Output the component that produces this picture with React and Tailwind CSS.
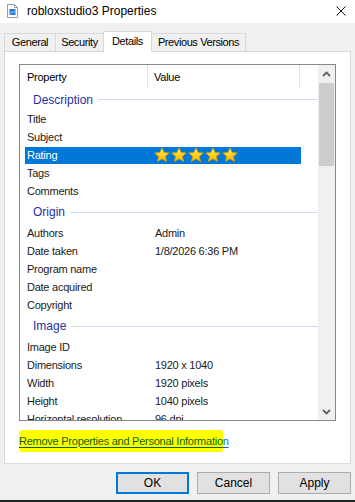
import React from 'react';

const font = { fontFamily: '"Liberation Sans", Arial, sans-serif' };

function Star() {
  return (
    <svg width="16" height="16" viewBox="0 0 16 16">
      <defs>
        <linearGradient id="sg" x1="0" y1="0" x2="0" y2="1">
          <stop offset="0" stopColor="#fff29a" />
          <stop offset="0.5" stopColor="#ffd21f" />
          <stop offset="1" stopColor="#f5b400" />
        </linearGradient>
      </defs>
      <path
        d="M8 0.8 L10.1 5.6 L15.3 6 L11.3 9.4 L12.6 14.6 L8 11.8 L3.4 14.6 L4.7 9.4 L0.7 6 L5.9 5.6 Z"
        fill="url(#sg)"
        stroke="#d99a00"
        strokeWidth="0.8"
        strokeLinejoin="round"
      />
    </svg>
  );
}

function FileIcon() {
  return (
    <svg width="11" height="14" viewBox="0 0 11 14">
      <path d="M0.5 0.5 H7.5 L10.5 3.5 V13.5 H0.5 Z" fill="#fff" stroke="#9a9a9a" />
      <path d="M7.5 0.5 V3.5 H10.5" fill="none" stroke="#9a9a9a" />
      <rect x="2.5" y="5" width="6" height="6" fill="#2a7ad5" />
      <path d="M3 10.5 L5 7.5 L6.5 9 L8.5 6.5" fill="none" stroke="#9fd0ff" strokeWidth="0.8" />
    </svg>
  );
}

function Row({ name, value }) {
  return (
    <div className="flex h-[18px] items-center text-[#1a1a1a]">
      <div className="w-[128px] pl-[7px] whitespace-nowrap overflow-hidden">{name}</div>
      <div className="pl-[7px] whitespace-nowrap">{value}</div>
    </div>
  );
}

function Group({ label, h }) {
  return (
    <div className={`flex items-center pl-[13px] ${h}`}>
      <span className="text-[12px] text-[#1e32a0] tracking-[0px] whitespace-nowrap">{label}</span>
      <div className="ml-[5px] h-px flex-1 bg-[#d2dcef]" />
    </div>
  );
}

function Chevron({ up }) {
  return (
    <svg width="9" height="6" viewBox="0 0 9 6">
      <path
        d={up ? 'M1 5 L4.5 1.5 L8 5' : 'M1 1 L4.5 4.5 L8 1'}
        fill="none"
        stroke="#606060"
        strokeWidth="1.8"
      />
    </svg>
  );
}

export default function App() {
  return (
    <div
      className="w-[355px] h-[502px] bg-[#f0f0f0] flex flex-col overflow-hidden text-[11px] tracking-[-0.25px] text-black"
      style={font}
    >
      <div className="h-[23px] bg-white flex items-center shrink-0">
        <div className="ml-[7px] mt-[-2px]">
          <FileIcon />
        </div>
        <span className="ml-[9px] text-[12px] tracking-[0px] mt-[-2px]">robloxstudio3 Properties</span>
        <svg className="ml-auto mr-[9px] mt-[-2px]" width="10" height="10" viewBox="0 0 10 10">
          <path d="M0.5 0.5 L9.5 9.5 M9.5 0.5 L0.5 9.5" stroke="#111" strokeWidth="1" />
        </svg>
      </div>

      <div className="pt-[8px] px-[4px] shrink-0">
        <div className="flex items-end h-[21px] -mb-px relative z-10 tracking-[-0.4px]">
          <div className="w-[52px] h-[19px] border border-[#d9d9d9] bg-[#f0f0f0] flex items-center justify-center">General</div>
          <div className="w-[49px] -ml-px h-[19px] border border-[#d9d9d9] bg-[#f0f0f0] flex items-center justify-center">Security</div>
          <div className="w-[49px] -ml-px h-[21px] border border-b-0 border-[#d9d9d9] bg-white flex items-center justify-center pb-[2px]">Details</div>
          <div className="w-[95px] -ml-px h-[19px] border border-[#d9d9d9] bg-[#f0f0f0] flex items-center justify-center">Previous Versions</div>
        </div>
        <div className="h-[413px] border border-[#d9d9d9] bg-white px-[14px] pt-[12px]">
          <div className="h-[357px] border border-[#828790] flex">
            <div className="flex-1 overflow-hidden">
              <div className="flex h-[24px] items-center">
                <div className="w-[128px] h-full pl-[7px] flex items-center border-r border-[#e5e5e5]">Property</div>
                <div className="w-[152px] h-full pl-[6px] flex items-center border-r border-[#e5e5e5]">Value</div>
              </div>
              <Group label="Description" h="h-[21px]" />
              <Row name="Title" />
              <Row name="Subject" />
              <div className="flex h-[18px] items-center">
                <div className="ml-[5px] w-[276px] h-[17px] bg-[#0078d7] flex items-center text-white">
                  <div className="w-[123px] pl-[2px]">Rating</div>
                  <div className="pl-[6px] flex gap-[1px]">
                    <Star />
                    <Star />
                    <Star />
                    <Star />
                    <Star />
                  </div>
                </div>
              </div>
              <Row name="Tags" />
              <Row name="Comments" />
              <Group label="Origin" h="h-[24px]" />
              <Row name="Authors" value="Admin" />
              <Row name="Date taken" value="1/8/2026 6:36 PM" />
              <Row name="Program name" />
              <Row name="Date acquired" />
              <Row name="Copyright" />
              <Group label="Image" h="h-[24px]" />
              <Row name="Image ID" />
              <Row name="Dimensions" value="1920 x 1040" />
              <Row name="Width" value="1920 pixels" />
              <Row name="Height" value="1040 pixels" />
              <Row name="Horizontal resolution" value="96 dpi" />
            </div>
            <div className="w-[17px] bg-[#f0f0f0] flex flex-col items-center">
              <div className="h-[18px] flex items-center justify-center">
                <Chevron up />
              </div>
              <div className="w-[15px] h-[83px] bg-[#cdcdcd]" />
              <div className="flex-1" />
              <div className="h-[17px] flex items-center justify-center">
                <Chevron />
              </div>
            </div>
          </div>
          <div className="mt-[11px] flex items-center h-[18px]">
            <span className="bg-[#ffff00] text-[#0b6400] underline underline-offset-[2px] px-0 py-[3px] rounded-[3px]">
              Remove Properties and Personal Informatio
            </span>
            <span className="text-[#0066cc] underline underline-offset-[2px]">n</span>
          </div>
        </div>
      </div>

      <div className="mt-[8px] flex justify-end gap-[8px] pr-[4px] shrink-0">
        <button className="w-[73px] h-[22px] bg-[#e1e1e1] border-2 border-[#0078d7] text-[12px] tracking-[0px]">OK</button>
        <button className="w-[73px] h-[22px] bg-[#e1e1e1] border border-[#adadad] text-[12px] tracking-[0px]">Cancel</button>
        <button className="w-[73px] h-[22px] bg-[#e1e1e1] border border-[#adadad] text-[12px] tracking-[0px]">Apply</button>
      </div>
      <div className="flex-1" />
      <div className="h-[2px] bg-[#1c2626] shrink-0" />
    </div>
  );
}
